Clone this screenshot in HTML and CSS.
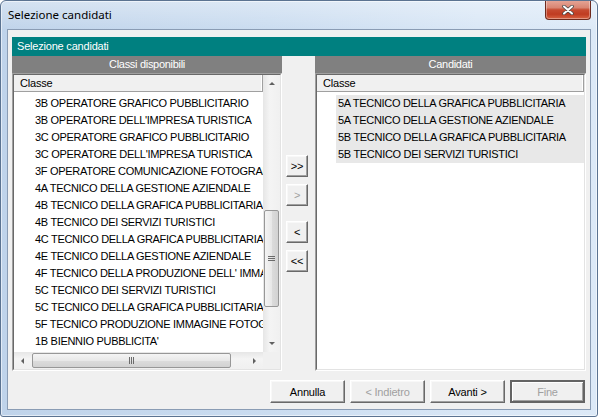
FILE: index.html
```html
<!DOCTYPE html>
<html lang="it">
<head>
<meta charset="utf-8">
<title>Selezione candidati</title>
<link rel="stylesheet" href="styles.css">
</head>
<body>
<div class="window">
  <div class="titlebar">
    <span class="title">Selezione candidati</span>
    <div class="close">
      <svg width="12" height="10" viewBox="0 0 12 10">
        <path d="M2 1.5 L10 8.5 M10 1.5 L2 8.5" stroke="#4a4a4a" stroke-width="3.6" stroke-linecap="round"/>
        <path d="M2 1.5 L10 8.5 M10 1.5 L2 8.5" stroke="#ffffff" stroke-width="2" stroke-linecap="round"/>
      </svg>
    </div>
  </div>
  <div class="client">
    <div class="banner">Selezione candidati</div>
    <div class="panes">
      <section class="pane pane-left">
        <div class="pane-head">Classi disponibili</div>
        <div class="listbox">
          <div class="listbox-inner with-scroll">
            <div class="list-area">
              <div class="col-head">Classe</div>
              <ul class="rows">
                <li>3B OPERATORE GRAFICO PUBBLICITARIO</li>
                <li>3B OPERATORE DELL'IMPRESA TURISTICA</li>
                <li>3C OPERATORE GRAFICO PUBBLICITARIO</li>
                <li>3C OPERATORE DELL'IMPRESA TURISTICA</li>
                <li>3F OPERATORE COMUNICAZIONE FOTOGRAFICA</li>
                <li>4A TECNICO DELLA GESTIONE AZIENDALE</li>
                <li>4B TECNICO DELLA GRAFICA PUBBLICITARIA</li>
                <li>4B TECNICO DEI SERVIZI TURISTICI</li>
                <li>4C TECNICO DELLA GRAFICA PUBBLICITARIA</li>
                <li>4E TECNICO DELLA GESTIONE AZIENDALE</li>
                <li>4F TECNICO DELLA PRODUZIONE DELL' IMMAGINE</li>
                <li>5C TECNICO DEI SERVIZI TURISTICI</li>
                <li>5C TECNICO DELLA GRAFICA PUBBLICITARIA</li>
                <li>5F TECNICO PRODUZIONE IMMAGINE FOTOGRAFICA</li>
                <li>1B BIENNIO PUBBLICITA'</li>
              </ul>
            </div>
            <div class="vscroll">
              <span class="arrow arrow-up"></span>
              <div class="track">
                <div class="thumb thumb-v"><span class="grip grip-v"></span></div>
              </div>
              <span class="arrow arrow-down"></span>
            </div>
            <div class="hscroll">
              <span class="arrow arrow-left"></span>
              <div class="track">
                <div class="thumb thumb-h"><span class="grip grip-h"></span></div>
              </div>
              <span class="arrow arrow-right"></span>
            </div>
            <div class="corner"></div>
          </div>
        </div>
      </section>
      <div class="movers">
        <button class="btn mv">&gt;&gt;</button>
        <button class="btn mv disabled">&gt;</button>
        <button class="btn mv sep">&lt;</button>
        <button class="btn mv">&lt;&lt;</button>
      </div>
      <section class="pane pane-right">
        <div class="pane-head">Candidati</div>
        <div class="listbox">
          <div class="listbox-inner">
            <div class="col-head">Classe</div>
            <ul class="rows selected">
              <li>5A TECNICO DELLA GRAFICA PUBBLICITARIA</li>
              <li>5A TECNICO DELLA GESTIONE AZIENDALE</li>
              <li>5B TECNICO DELLA GRAFICA PUBBLICITARIA</li>
              <li>5B TECNICO DEI SERVIZI TURISTICI</li>
            </ul>
          </div>
        </div>
      </section>
    </div>
    <div class="footer">
      <button class="btn wide">Annulla</button>
      <button class="btn wide disabled">&lt; Indietro</button>
      <button class="btn wide">Avanti &gt;</button>
      <button class="btn wide disabled default">Fine</button>
    </div>
  </div>
</div>
</body>
</html>
```

FILE: styles.css
```css
* {
  box-sizing: border-box;
  margin: 0;
  padding: 0;
}

html, body {
  width: 598px;
  height: 417px;
  overflow: hidden;
  background: #ffffff;
}

body {
  font-family: "Liberation Sans", Arial, sans-serif;
  font-size: 11px;
  color: #000000;
}

.window {
  width: 598px;
  height: 417px;
  border: 1px solid #5b7391;
  border-radius: 6px 6px 3px 3px;
  background:
    linear-gradient(to bottom, rgba(255,255,255,0.35), rgba(255,255,255,0) 30px),
    linear-gradient(to right, #bfd3ea, #cadcf0 45%, #d9e7f6 80%, #dce9f7);
  box-shadow: inset 0 0 0 1px rgba(255,255,255,0.55);
  display: flex;
  flex-direction: column;
  overflow: hidden;
}

.titlebar {
  height: 28px;
  display: flex;
  justify-content: space-between;
  align-items: flex-start;
  padding-left: 7px;
  padding-right: 6px;
}

.title {
  font-family: "Noto Sans", "Liberation Sans", sans-serif;
  font-size: 11.5px;
  line-height: 27px;
  color: #000000;
}

.close {
  width: 46px;
  height: 20px;
  margin-top: -1px;
  border: 1px solid #6e2a1d;
  border-top: none;
  border-radius: 0 0 4px 4px;
  background: linear-gradient(to bottom, #e6a799 0%, #d98673 40%, #c64a30 52%, #c03c22 75%, #d86342 100%);
  box-shadow: inset 0 0 0 1px rgba(255,255,255,0.35);
  display: flex;
  align-items: center;
  justify-content: center;
}

.close svg {
  display: block;
}

.client {
  flex: 1;
  margin: 0 6px 6px;
  border: 1px solid #8a9cb4;
  background: #f0f0f0;
  padding: 7px 4px 6px;
  display: flex;
  flex-direction: column;
}

.banner {
  height: 19px;
  line-height: 19px;
  background: #008080;
  color: #ffffff;
  padding-left: 5px;
  letter-spacing: -0.2px;
}

.panes {
  display: flex;
  height: 315px;
}

.pane {
  display: flex;
  flex-direction: column;
}

.pane-left {
  width: 270px;
}

.pane-right {
  width: 271px;
}

.pane-head {
  height: 17px;
  line-height: 17px;
  background: #808080;
  color: #ffffff;
  text-align: center;
  letter-spacing: -0.3px;
}

.listbox {
  height: 298px;
  border: 1px solid;
  border-color: #a0a0a0 #ffffff #ffffff #a0a0a0;
}

.listbox-inner {
  height: 100%;
  border: 1px solid;
  border-color: #696969 #e3e3e3 #e3e3e3 #696969;
  background: #ffffff;
  overflow: hidden;
}

.listbox-inner.with-scroll {
  display: grid;
  grid-template-columns: 1fr 17px;
  grid-template-rows: 1fr 17px;
}

.list-area {
  overflow: hidden;
  min-width: 0;
}

.col-head {
  height: 17px;
  line-height: 16px;
  background: #f0f0f0;
  border-bottom: 1px solid #a0a0a0;
  border-right: 1px solid #a0a0a0;
  padding-left: 6px;
  letter-spacing: -0.2px;
  box-shadow: inset -1px 0 #ffffff;
}

.rows {
  list-style: none;
  padding-top: 3px;
}

.rows li {
  height: 17px;
  line-height: 17px;
  margin-left: 19px;
  padding-left: 2px;
  white-space: nowrap;
  letter-spacing: -0.3px;
}

.rows.selected li {
  background: #e8e8e8;
}

/* scrollbars */
.vscroll {
  display: flex;
  flex-direction: column;
  background: linear-gradient(to right, #e6e6e6, #f4f4f4 40%, #f0f0f0);
}

.hscroll {
  display: flex;
  background: linear-gradient(to bottom, #e6e6e6, #f4f4f4 40%, #f0f0f0);
}

.corner {
  background: #f0f0f0;
}

.arrow {
  width: 17px;
  height: 17px;
  flex: none;
  display: flex;
  align-items: center;
  justify-content: center;
}

.arrow::before {
  content: "";
  width: 0;
  height: 0;
  border: 3px solid transparent;
}

.arrow-up::before {
  border-bottom: 3px solid #606060;
  border-top-width: 0;
}

.arrow-down::before {
  border-top: 3px solid #606060;
  border-bottom-width: 0;
}

.arrow-left::before {
  border-right: 3px solid #606060;
  border-left-width: 0;
}

.arrow-right::before {
  border-left: 3px solid #606060;
  border-right-width: 0;
}

.track {
  flex: 1;
}

.thumb {
  border: 1px solid #979797;
  border-radius: 2px;
  display: flex;
  align-items: center;
  justify-content: center;
}

.thumb-v {
  width: 15px;
  height: 97px;
  margin: 118px 0 0 1px;
  background: linear-gradient(to right, #f4f4f4, #e8e8e8 50%, #dcdcdc 51%, #d2d2d2);
}

.thumb-h {
  width: 199px;
  height: 15px;
  margin: 1px 0 0 1px;
  background: linear-gradient(to bottom, #f4f4f4, #e8e8e8 50%, #dcdcdc 51%, #d2d2d2);
}

.grip {
  display: block;
}

.grip-v {
  width: 7px;
  height: 5px;
  background: repeating-linear-gradient(to bottom, #6b6b6b 0 1px, transparent 1px 2px);
}

.grip-h {
  width: 5px;
  height: 7px;
  background: repeating-linear-gradient(to right, #6b6b6b 0 1px, transparent 1px 2px);
}

/* buttons */
.btn {
  font-family: "Liberation Sans", Arial, sans-serif;
  font-size: 11px;
  color: #000000;
  background: #f0f0f0;
  border: 1px solid;
  border-color: #ffffff #696969 #696969 #ffffff;
  box-shadow: inset -1px -1px #a0a0a0, inset 1px 1px #f8f8f8;
  letter-spacing: -0.2px;
  display: flex;
  align-items: center;
  justify-content: center;
}

.btn.disabled {
  color: #a0a0a0;
}

.btn.default {
  border: 1px solid #646464;
  box-shadow: inset 1px 1px #646464, inset -1px -1px #646464, inset 2px 2px #ffffff, inset -2px -2px #a0a0a0;
}

.movers {
  width: 33px;
  padding: 99px 0 0 4px;
  display: flex;
  flex-direction: column;
}

.mv {
  width: 22px;
  height: 22px;
}

.mv + .mv {
  margin-top: 7px;
}

.mv.sep {
  margin-top: 15px;
}

.footer {
  margin-top: 9px;
  height: 23px;
  display: flex;
  justify-content: flex-end;
  gap: 5px;
  padding-right: 1px;
}

.wide {
  width: 75px;
  height: 23px;
}
```
